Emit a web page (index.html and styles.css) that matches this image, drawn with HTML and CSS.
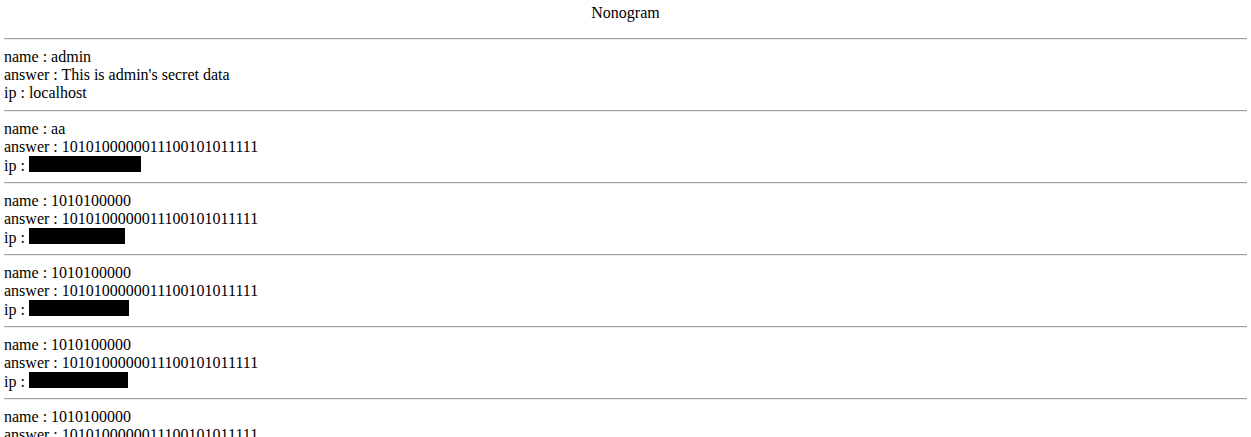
FILE: index.html
```html
<!DOCTYPE html>
<html>
<head>
<meta charset="utf-8">
<title>Nonogram</title>
<link rel="stylesheet" href="styles.css">
</head>
<body>
<div class="title">Nonogram</div>
<hr class="rule">
<div class="record">
  <div class="line">name : admin</div>
  <div class="line">answer : This is admin's secret data</div>
  <div class="line">ip : localhost</div>
</div>
<hr class="rule">
<div class="record">
  <div class="line">name : aa</div>
  <div class="line">answer : 1010100000011100101011111</div>
  <div class="line">ip : <span class="redact w112"></span></div>
</div>
<hr class="rule">
<div class="record">
  <div class="line">name : 1010100000</div>
  <div class="line">answer : 1010100000011100101011111</div>
  <div class="line">ip : <span class="redact w96"></span></div>
</div>
<hr class="rule">
<div class="record">
  <div class="line">name : 1010100000</div>
  <div class="line">answer : 1010100000011100101011111</div>
  <div class="line">ip : <span class="redact w100"></span></div>
</div>
<hr class="rule">
<div class="record">
  <div class="line">name : 1010100000</div>
  <div class="line">answer : 1010100000011100101011111</div>
  <div class="line">ip : <span class="redact w99"></span></div>
</div>
<hr class="rule">
<div class="record">
  <div class="line">name : 1010100000</div>
  <div class="line">answer : 1010100000011100101011111</div>
  <div class="line">ip : <span class="redact w100"></span></div>
</div>
<hr class="rule">
</body>
</html>
```

FILE: styles.css
```css
html, body {
  background: #ffffff;
}

body {
  margin: 0;
  padding: 4px;
  font-family: "Liberation Serif", "Times New Roman", serif;
  font-size: 16px;
  line-height: 18px;
  color: #000000;
}

.title {
  text-align: center;
  line-height: 18px;
  margin-bottom: 16px;
}

.rule {
  margin: 0;
  height: 0;
  border: 0;
  border-top: 1px solid #a0a0a0;
  border-bottom: 1px solid #eeeeee;
}

.record {
  padding: 8px 0;
}

.line {
  height: 18px;
  white-space: nowrap;
}

.redact {
  display: inline-block;
  height: 16px;
  background: #000000;
  vertical-align: -1px;
}

.w112 { width: 112px; }
.w96 { width: 96px; }
.w100 { width: 100px; }
.w99 { width: 99px; }
```
